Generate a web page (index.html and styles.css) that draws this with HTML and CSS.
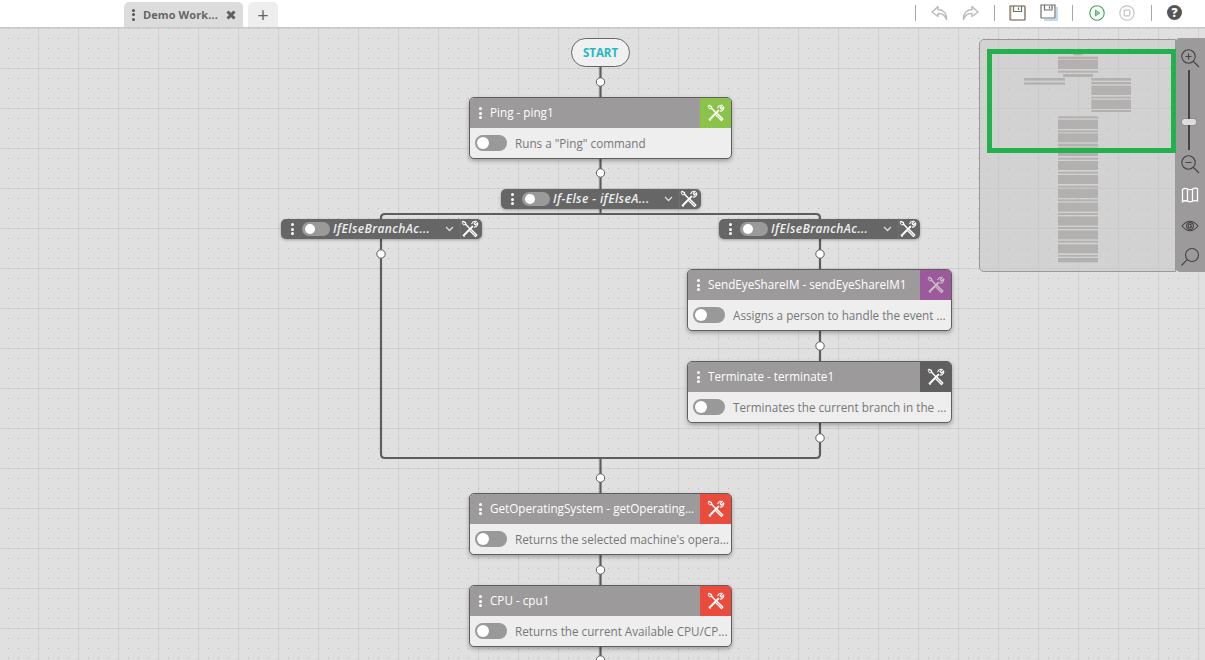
FILE: index.html
```html
<!DOCTYPE html>
<html lang="en">
<head>
<meta charset="utf-8">
<title>Demo Workflow</title>
<link rel="stylesheet" href="styles.css">
</head>
<body>
<svg class="defs" width="0" height="0" aria-hidden="true">
  <symbol id="tools" viewBox="0 0 18 18">
    <g fill="none" stroke="currentColor" stroke-linecap="round" stroke-linejoin="round">
      <path d="M2 1.4 L4.4 2.6 L4.8 4.6 L8.4 8.2" stroke-width="1.4"/>
      <path d="M2 1.4 L1.2 2.6 L2.4 4.8 L4.8 4.6" stroke-width="1"/>
      <path d="M10.2 9.6 L15.8 15 L14.6 16.4 L9 11" stroke-width="1.4"/>
      <path d="M11.4 6.6 L3.4 14.8" stroke-width="2"/>
      <path d="M2.2 15.2 L3.2 16.2" stroke-width="1.3"/>
      <path d="M10.8 3.6 C11.4 1.8 13.4 1 15.2 1.4 L13.2 3.6 L14.4 5 L16.6 2.9 C17 5 15.8 7 13.4 7.2" stroke-width="1.2"/>
    </g>
  </symbol>
</svg>

<header class="topbar">
  <div class="tabs">
    <div class="tab tab-active">
      <span class="tab-dots"><i></i><i></i><i></i></span>
      <span class="tab-name">Demo Work...</span>
      <svg class="tab-close" viewBox="0 0 10 10" width="10" height="10"><path d="M1.5 1.5 L8.5 8.5 M8.5 1.5 L1.5 8.5"/></svg>
    </div>
    <div class="tab tab-add">+</div>
  </div>
  <div class="tools">
    <span class="sep"></span>
    <svg class="tool t-undo" width="17" height="16" viewBox="0 0 17 16"><path d="M7 1.5 L1 7 L7 11.5 V8.5 C11 8 14 10 15.5 14.5 C16 8.5 12.5 4.8 7 4.6 Z"/></svg>
    <svg class="tool t-redo" width="17" height="16" viewBox="0 0 17 16"><path d="M10 1.5 L16 7 L10 11.5 V8.5 C6 8 3 10 1.5 14.5 C1 8.5 4.5 4.8 10 4.6 Z"/></svg>
    <span class="sep s2"></span>
    <svg class="tool t-save" width="17" height="16" viewBox="0 0 17 16">
      <path class="o" d="M2 1 H16 V15 H2 Z"/>
      <path class="g" d="M1 1 H15 Q16 1 16 2 V14 Q16 15 15 15 H2 Q1 15 1 14 Z M4.5 1 V6.5 H12.5 V1 M9.5 2.5 V5"/>
    </svg>
    <svg class="tool t-saveall" width="18" height="17" viewBox="0 0 18 17">
      <path class="o" d="M17 3 V16 H4"/>
      <path class="g" d="M1 1 H15 V14 H2 Q1 14 1 13 Z M4.5 1 V6 H12 V1 M9.5 2.2 V4.8"/>
    </svg>
    <span class="sep s3"></span>
    <svg class="tool t-play" width="16" height="16" viewBox="0 0 16 16"><circle cx="8" cy="8" r="7.2"/><path d="M6.4 5 L10.8 8 L6.4 11 Z"/></svg>
    <svg class="tool t-stop" width="16" height="16" viewBox="0 0 16 16"><circle cx="8" cy="8" r="7.2"/><rect x="5.2" y="5.2" width="5.6" height="5.6" rx=".8"/></svg>
    <span class="sep s4"></span>
    <span class="help">?</span>
  </div>
</header>

<main class="canvas">
  <svg class="wires" width="1205" height="632" viewBox="0 28 1205 632">
    <path d="M600.5 67 V97 M600.5 158 V189 M600.5 209 V214 M820 239 V269 M820 331 V361 M820 423 V454 Q820 458 816 458 H385 Q381 458 381 454 V239 M600.5 458 V493 M600.5 555 V585 M600.5 647 V660"/>
    <path d="M381 222 V218 Q381 214 385 214 H816 Q820 214 820 218 V222"/>
    <g class="ports">
      <circle cx="600.5" cy="82" r="4.2"/>
      <circle cx="600.5" cy="173" r="4.2"/>
      <circle cx="381" cy="254" r="4.2"/>
      <circle cx="820" cy="254" r="4.2"/>
      <circle cx="820" cy="346" r="4.2"/>
      <circle cx="820" cy="438" r="4.2"/>
      <circle cx="600.5" cy="478" r="4.2"/>
      <circle cx="600.5" cy="570" r="4.2"/>
      <circle cx="600.5" cy="660" r="4.2"/>
    </g>
  </svg>

  <div class="start">START</div>

  <article class="node n-ping">
    <div class="node-head">
      <span class="dots"><i></i><i></i><i></i></span>
      <span class="node-title">Ping - ping1</span>
      <span class="node-tool c-green"><svg width="18" height="18"><use href="#tools"/></svg></span>
    </div>
    <div class="node-body"><span class="toggle"></span><span class="node-desc">Runs a "Ping" command</span></div>
  </article>

  <div class="mini n-ifelse">
    <span class="dots"><i></i><i></i><i></i></span><span class="toggle small"></span>
    <span class="mini-title">If-Else - ifElseA...</span>
    <svg class="chev" width="9" height="6" viewBox="0 0 9 6"><path d="M1 1 L4.5 4.5 L8 1"/></svg>
    <span class="mini-tool"><svg width="18" height="18"><use href="#tools"/></svg></span>
  </div>
  <div class="mini n-left">
    <span class="dots"><i></i><i></i><i></i></span><span class="toggle small"></span>
    <span class="mini-title">IfElseBranchAc...</span>
    <svg class="chev" width="9" height="6" viewBox="0 0 9 6"><path d="M1 1 L4.5 4.5 L8 1"/></svg>
    <span class="mini-tool"><svg width="18" height="18"><use href="#tools"/></svg></span>
  </div>
  <div class="mini n-right">
    <span class="dots"><i></i><i></i><i></i></span><span class="toggle small"></span>
    <span class="mini-title">IfElseBranchAc...</span>
    <svg class="chev" width="9" height="6" viewBox="0 0 9 6"><path d="M1 1 L4.5 4.5 L8 1"/></svg>
    <span class="mini-tool"><svg width="18" height="18"><use href="#tools"/></svg></span>
  </div>

  <article class="node n-send">
    <div class="node-head">
      <span class="dots"><i></i><i></i><i></i></span>
      <span class="node-title">SendEyeShareIM - sendEyeShareIM1</span>
      <span class="node-tool c-purple"><svg width="18" height="18"><use href="#tools"/></svg></span>
    </div>
    <div class="node-body"><span class="toggle"></span><span class="node-desc">Assigns a person to handle the event ...</span></div>
  </article>

  <article class="node n-term">
    <div class="node-head">
      <span class="dots"><i></i><i></i><i></i></span>
      <span class="node-title">Terminate - terminate1</span>
      <span class="node-tool c-dark"><svg width="18" height="18"><use href="#tools"/></svg></span>
    </div>
    <div class="node-body"><span class="toggle"></span><span class="node-desc">Terminates the current branch in the ...</span></div>
  </article>

  <article class="node n-os">
    <div class="node-head">
      <span class="dots"><i></i><i></i><i></i></span>
      <span class="node-title">GetOperatingSystem - getOperating...</span>
      <span class="node-tool c-red"><svg width="18" height="18"><use href="#tools"/></svg></span>
    </div>
    <div class="node-body"><span class="toggle"></span><span class="node-desc">Returns the selected machine's opera...</span></div>
  </article>

  <article class="node n-cpu">
    <div class="node-head">
      <span class="dots"><i></i><i></i><i></i></span>
      <span class="node-title">CPU - cpu1</span>
      <span class="node-tool c-red"><svg width="18" height="18"><use href="#tools"/></svg></span>
    </div>
    <div class="node-body"><span class="toggle"></span><span class="node-desc">Returns the current Available CPU/CP...</span></div>
  </article>

  <aside class="overview">
    <div class="overview-map">
      <svg class="overview-svg" width="197" height="233" viewBox="12 12 591 699">
        <g class="mm">
          <rect x="295" y="55" width="28" height="6"/>
          <rect x="249" y="65" width="120" height="8"/><rect x="249" y="75" width="120" height="27"/><rect x="249" y="107" width="120" height="6"/>
          <rect x="264" y="117" width="90" height="9"/>
          <rect x="147" y="129" width="123" height="8"/><rect x="147" y="142" width="123" height="7"/>
          <rect x="349" y="129" width="119" height="8"/><rect x="349" y="141" width="119" height="7"/><rect x="349" y="152" width="119" height="28"/><rect x="349" y="185" width="119" height="5"/><rect x="349" y="194" width="119" height="28"/><rect x="349" y="225" width="119" height="6"/>
          <rect x="249" y="244" width="120" height="6"/><rect x="249" y="254" width="120" height="28"/><rect x="249" y="286" width="120" height="6"/><rect x="249" y="295" width="120" height="27"/><rect x="249" y="326" width="120" height="8"/><rect x="249" y="337" width="120" height="26"/>
          <rect x="249" y="368" width="120" height="6"/><rect x="249" y="378" width="120" height="27"/><rect x="249" y="410" width="120" height="6"/><rect x="249" y="420" width="120" height="27"/><rect x="249" y="452" width="120" height="6"/><rect x="249" y="461" width="120" height="28"/>
          <rect x="249" y="493" width="120" height="6"/><rect x="249" y="503" width="120" height="27"/><rect x="249" y="534" width="120" height="6"/><rect x="249" y="544" width="120" height="28"/><rect x="249" y="576" width="120" height="6"/><rect x="249" y="586" width="120" height="27"/>
          <rect x="249" y="617" width="120" height="6"/><rect x="249" y="628" width="120" height="27"/><rect x="249" y="660" width="120" height="5"/><rect x="249" y="669" width="120" height="13"/>
        </g>
      </svg>
      <div class="viewport"></div>
    </div>
    <nav class="overview-side">
      <svg class="zi" width="22" height="22" viewBox="0 0 22 22"><circle cx="9.5" cy="9.5" r="6.7"/><path d="M14.5 14.5 L20 20 M6.5 9.5 H12.5 M9.5 6.5 V12.5"/></svg>
      <span class="slider"><span class="thumb"></span></span>
      <svg class="zo" width="22" height="22" viewBox="0 0 22 22"><circle cx="9.5" cy="9.5" r="6.7"/><path d="M14.5 14.5 L20 20 M6.5 9.5 H12.5"/></svg>
      <svg class="map" width="18" height="18" viewBox="0 0 18 18"><path d="M1.5 3.5 Q4 1.5 6.5 3 Q9 4.2 11.5 3 Q14 1.5 16.5 2.5 V15 Q14 14 11.5 15.2 Q9 16.4 6.5 15.2 Q4 14 1.5 15.8 Z M6.5 3 V15.2 M11.5 3 V15.2"/></svg>
      <svg class="eye" width="18" height="14" viewBox="0 0 18 14"><path d="M1 7 Q9 -2.5 17 7 Q9 16.5 1 7 Z"/><circle cx="9" cy="7" r="3.4"/><path d="M10.4 6 A1.8 1.8 0 1 0 10.4 8 V7 H9"/></svg>
      <svg class="find" width="20" height="20" viewBox="0 0 20 20"><circle cx="12" cy="8" r="6.5"/><path d="M7.2 12.6 L1.5 18.5"/></svg>
    </nav>
  </aside>
</main>
</body>
</html>
```

FILE: styles.css
```css
* { box-sizing: border-box; }
html, body { margin: 0; height: 100%; }
body {
  display: flex;
  flex-direction: column;
  width: 1205px;
  height: 660px;
  overflow: hidden;
  font-family: "Open Sans", "Liberation Sans", sans-serif;
  background: #fff;
}
.defs { position: absolute; }

/* Top bar */
.topbar {
  flex: 0 0 28px;
  display: flex;
  justify-content: space-between;
  background: #fff;
  border-bottom: 1px solid #c9c9c9;
}
.tabs { display: flex; align-items: flex-end; gap: 5px; padding-left: 124px; }
.tab {
  height: 25px;
  border-radius: 5px 5px 0 0;
  display: flex;
  align-items: center;
}
.tab-active { width: 119px; background: #dcdcdc; padding-left: 8px; color: #666; }
.tab-dots { display: flex; flex-direction: column; gap: 1.5px; margin-right: 8px; }
.tab-dots i { width: 3px; height: 3px; border-radius: 50%; background: #555; }
.tab-name { font-size: 11px; font-weight: 700; white-space: nowrap; letter-spacing: .1px; }
.tab-close { margin-left: 8px; fill: none; stroke: #5f5f5f; stroke-width: 3; }
.tab-add { width: 30px; justify-content: center; background: #eee; color: #666; font-size: 20px; font-weight: 400; }

.tools { display: flex; align-items: center; padding-right: 23px; height: 25px; }
.sep { width: 1px; height: 16px; background: #a8a8a8; }
.tool { flex: none; }
.t-undo { margin-left: 15px; fill: none; stroke: #bcbcbc; stroke-width: 1.5; stroke-linejoin: round; }
.t-redo { margin-left: 14px; fill: none; stroke: #bcbcbc; stroke-width: 1.5; stroke-linejoin: round; }
.s2 { margin-left: 15px; }
.t-save { margin-left: 14px; }
.t-saveall { margin-left: 14px; }
.t-save path, .t-saveall path { fill: none; stroke-width: 1.2; }
.o { stroke: #efc48e; }
.t-saveall .o { stroke: #a9cdec; stroke-width: 1.4; }
.g { stroke: #6f6f6f; }
.s3 { margin-left: 14px; }
.t-play { margin-left: 16px; fill: none; stroke: #3aa655; stroke-width: 1.1; }
.t-play path { fill: #8fd0a0; stroke: #3aa655; stroke-width: .8; }
.t-stop { margin-left: 14px; fill: none; stroke: #c4c4c4; stroke-width: 1.2; }
.s4 { margin-left: 16px; }
.help {
  margin-left: 15px;
  width: 15px;
  height: 15px;
  border-radius: 50%;
  background: #555;
  color: #fff;
  font-size: 12px;
  font-weight: 800;
  line-height: 15px;
  text-align: center;
}

/* Canvas */
.canvas {
  flex: 1;
  position: relative;
  overflow: hidden;
  background-color: #e0e0e0;
  background-image:
    radial-gradient(circle at .5px .5px, #b6b6b6 .75px, transparent .8px),
    linear-gradient(to right, #d2d2d2 1px, transparent 1px),
    linear-gradient(to bottom, #d2d2d2 1px, transparent 1px);
  background-size: 10px 10px, 40px 40px, 40px 40px;
  background-position: 8px 0, 38px 0, 0 0;
}
.wires { position: absolute; left: 0; top: 0; fill: none; stroke: #5d5d5d; stroke-width: 2.2; }
.ports circle { fill: #fff; stroke: #5d5d5d; stroke-width: 1; }

.start {
  position: absolute;
  left: 571px;
  top: 10px;
  width: 59px;
  height: 29px;
  border: 1px solid #666;
  border-radius: 15px;
  background: #f0f0f0;
  color: #25b9c1;
  font-size: 11.5px;
  font-weight: 700;
  line-height: 27px;
  text-align: center;
}

/* Large nodes */
.node {
  position: absolute;
  width: 263px;
  height: 62px;
  border: 1px solid #5f5f5f;
  border-radius: 5px;
  overflow: hidden;
  background: #eee;
  box-shadow: 0 2px 4px rgba(0, 0, 0, .3);
}
.n-ping { left: 469px; top: 69px; }
.n-send { left: 687px; top: 241px; width: 265px; }
.n-term { left: 687px; top: 333px; width: 265px; }
.n-os { left: 469px; top: 465px; }
.n-cpu { left: 469px; top: 557px; }

.node-head { height: 30px; display: flex; align-items: center; background: #9c9a9a; color: #fff; }
.dots { display: flex; flex-direction: column; gap: 1.5px; flex: none; }
.dots i { width: 3px; height: 3px; border-radius: 50%; background: #fff; }
.node-head .dots { margin-left: 9px; }
.node-title {
  flex: 1;
  min-width: 0;
  margin-left: 8px;
  padding-bottom: 2px;
  font-size: 11.7px;
  white-space: nowrap;
  overflow: hidden;
}
.node-tool {
  flex: 0 0 31px;
  height: 100%;
  display: flex;
  align-items: center;
  justify-content: center;
  color: #fff;
}
.c-green { background: #8bc34a; }
.c-purple { background: #9c5a9c; color: #c9c0c9; }
.c-dark { background: #5f5f5f; }
.c-red { background: #e94b3c; }

.node-body { height: 30px; display: flex; align-items: center; padding-left: 5px; }
.toggle {
  flex: none;
  width: 32px;
  height: 16px;
  border-radius: 8px;
  background: #999;
  position: relative;
}
.toggle::before {
  content: "";
  position: absolute;
  left: 2px;
  top: 2px;
  width: 12px;
  height: 12px;
  border-radius: 50%;
  background: #fff;
}
.node-desc { margin-left: 8px; font-size: 11.7px; color: #777; white-space: nowrap; }

/* Compact nodes */
.mini {
  position: absolute;
  width: 201px;
  height: 20px;
  display: flex;
  align-items: center;
  border-radius: 5px;
  background: #666;
  color: #eee;
  box-shadow: 0 1px 3px rgba(0, 0, 0, .3);
  padding-left: 10px;
}
.n-ifelse { left: 501px; top: 161px; width: 200px; }
.n-left { left: 281px; top: 191px; }
.n-right { left: 719px; top: 191px; }
.toggle.small { width: 28px; height: 14px; margin-left: 8px; background: #9a9a9a; }
.toggle.small::before { left: 3px; top: 2px; width: 10px; height: 10px; }
.mini-title {
  flex: 1;
  min-width: 0;
  margin-left: 3px;
  padding-bottom: 1px;
  font-size: 12px;
  font-style: italic;
  font-weight: 600;
  letter-spacing: .4px;
  white-space: nowrap;
}
.chev { flex: none; margin-right: 6px; fill: none; stroke: #ddd; stroke-width: 1.3; }
.mini-tool {
  flex: 0 0 22px;
  height: 100%;
  display: flex;
  align-items: center;
  justify-content: center;
  color: #fff;
  border-left: 1px solid #707070;
  padding-right: 3px;
}

/* Overview */
.overview { position: absolute; left: 979px; top: 10px; width: 226px; height: 234px; display: flex; }
.overview-map {
  position: relative;
  flex: 0 0 197px;
  height: 233px;
  margin-top: 1px;
  border: 1px solid #999;
  border-radius: 5px 0 0 5px;
  background: rgba(200, 200, 200, .6);
}
.overview-svg { position: absolute; left: -1px; top: -1px; }
.mm rect { fill: #b3b0b0; }
.viewport { position: absolute; left: 7px; top: 9px; width: 189px; height: 104px; border: 5px solid #22b14c; }
.overview-side {
  flex: 0 0 30px;
  margin-left: -1px;
  height: 234px;
  background: #9c9a9a;
  border-radius: 5px 0 0 5px;
  display: flex;
  flex-direction: column;
  align-items: center;
  padding-top: 9px;
}
.overview-side svg { flex: none; fill: none; stroke: #444; stroke-width: 1.1; }
.slider { position: relative; width: 2px; height: 80px; margin: 1px 2px 0 0; background: #444; }
.thumb {
  position: absolute;
  left: -6px;
  top: 49px;
  width: 14px;
  height: 6px;
  border-radius: 2px;
  background: #ddd;
  box-shadow: 0 0 1px #333;
}
.overview-side .zo { margin-top: 3px; }
.overview-side .map { margin-top: 11px; stroke: #fff; stroke-width: 1.3; }
.overview-side .eye { margin-top: 15px; }
.overview-side .find { margin-top: 14px; }
```
